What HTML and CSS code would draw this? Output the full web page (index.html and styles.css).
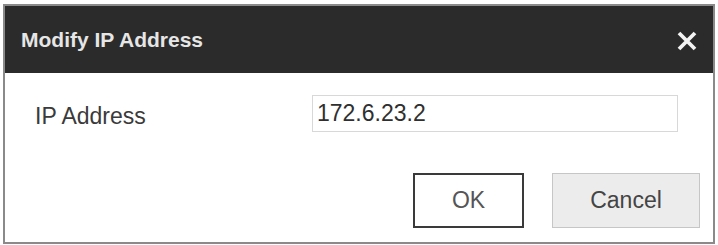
FILE: index.html
```html
<!DOCTYPE html>
<html>
<head>
<meta charset="utf-8">
<link rel="stylesheet" href="styles.css">
</head>
<body>
<div class="dialog">
  <div class="titlebar">
    <span class="title">Modify IP Address</span>
    <svg class="close" width="20" height="20" viewBox="0 0 20 20">
      <path d="M2 2 L18 18 M18 2 L2 18" stroke="#f4f4f4" stroke-width="3.8" stroke-linecap="butt"/>
    </svg>
  </div>
  <div class="content">
    <div class="row">
      <label class="label">IP Address</label>
      <div class="input">172.6.23.2</div>
    </div>
    <div class="actions">
      <button class="btn btn-ok">OK</button>
      <button class="btn btn-cancel">Cancel</button>
    </div>
  </div>
</div>
</body>
</html>
```
FILE: styles.css
```css
html, body {
  margin: 0;
  padding: 0;
  background: #ffffff;
}
body {
  font-family: "Liberation Sans", Arial, sans-serif;
}
.dialog {
  margin: 4px 0 0 3px;
  width: 712px;
  height: 240px;
  box-sizing: border-box;
  border: 2px solid #8a8a8a;
  background: #ffffff;
  display: flex;
  flex-direction: column;
}
.titlebar {
  height: 67px;
  background: #2b2b2b;
  display: flex;
  align-items: center;
  justify-content: space-between;
  padding: 0 16px 0 16px;
}
.title {
  color: #e6e6e6;
  font-weight: bold;
  font-size: 21px;
}
.close {
  display: block;
  margin-top: 2px;
}
.content {
  flex: 1;
  padding: 22px 13px 14px 30px;
  display: flex;
  flex-direction: column;
}
.row {
  display: flex;
  align-items: center;
  height: 37px;
}
.label {
  width: 277px;
  font-size: 23px;
  color: #3a3a3a;
  margin-top: 5px;
}
.input {
  width: 366px;
  height: 37px;
  box-sizing: border-box;
  border: 1px solid #d8d8d8;
  padding-left: 4px;
  font-size: 23px;
  color: #2f2f2f;
  line-height: 35px;
}
.actions {
  margin-top: auto;
  display: flex;
  justify-content: flex-end;
  gap: 28px;
}
.btn {
  height: 55px;
  font-family: "Liberation Sans", Arial, sans-serif;
  font-size: 23px;
  box-sizing: border-box;
  padding: 0;
  margin: 0;
}
.btn-ok {
  width: 111px;
  background: #ffffff;
  border: 2px solid #3a3a3a;
  color: #555555;
}
.btn-cancel {
  width: 148px;
  background: #ececec;
  border: 1px solid #c6c6c6;
  color: #444444;
}
```
